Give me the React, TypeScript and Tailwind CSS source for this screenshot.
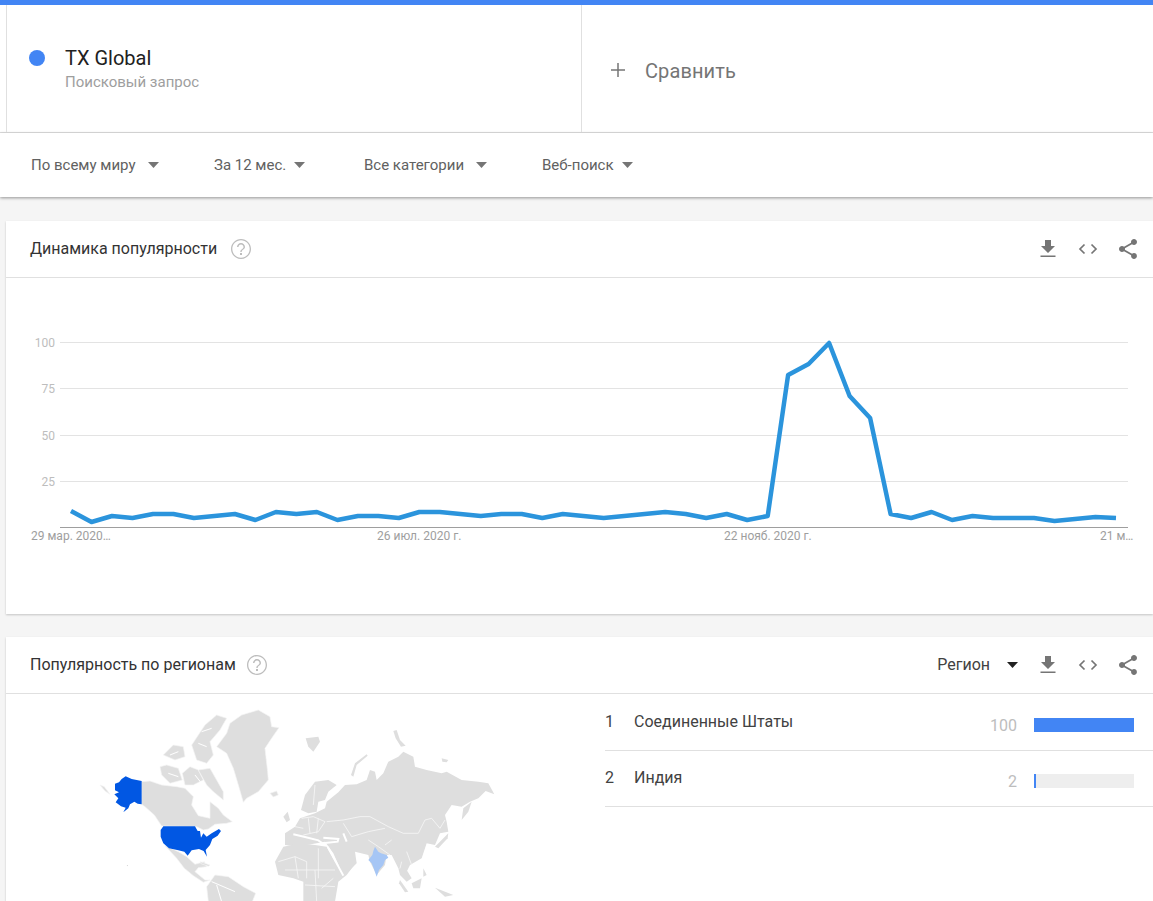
const roboto = "font-['Roboto',sans-serif]";

const Tri = ({ color = "#757575" }: { color?: string }) => (
  <svg width="11" height="6" viewBox="0 0 11 6" className="shrink-0">
    <path d="M0 0h11L5.5 6z" fill={color} />
  </svg>
);

const ActionIcons = () => (
  <div className="flex items-center gap-[16px]">
    <svg width="24" height="24" viewBox="0 0 24 24" fill="#757575">
      <path d="M19 9h-4V3H9v6H5l7 7 7-7zM4.5 18.5v1.6h15v-1.6z" />
    </svg>
    <svg width="24" height="24" viewBox="0 0 24 24" fill="none" stroke="#757575" strokeWidth="1.7">
      <path d="M8.5 7.5 4 12l4.500 4.500M15.500 7.500 20 12l-4.500 4.500" />
    </svg>
    <svg width="24" height="24" viewBox="0 0 24 24" fill="#757575">
      <path d="M18 16.080c-.76 0-1.440.3-1.960.77L8.910 12.700c.05-.23.09-.46.09-.7s-.04-.47-.09-.7l7.050-4.110c.54.5 1.250.81 2.040.81 1.660 0 3-1.340 3-3s-1.340-3-3-3-3 1.340-3 3c0 .24.04.47.09.7L8.040 9.810C7.500 9.310 6.790 9 6 9c-1.660 0-3 1.340-3 3s1.340 3 3 3c.79 0 1.500-.31 2.040-.81l7.120 4.160c-.05.21-.08.43-.08.65 0 1.610 1.310 2.920 2.920 2.920s2.920-1.310 2.920-2.920-1.310-2.920-2.920-2.920z" />
    </svg>
  </div>
);

const Help = () => (
  <svg width="24" height="24" viewBox="0 0 24 24" fill="#bdbdbd">
    <path d="M11 18h2v-2h-2v2zm1-16C6.480 2 2 6.480 2 12s4.480 10 10 10 10-4.480 10-10S17.520 2 12 2zm0 18.700c-4.800 0-8.700-3.900-8.700-8.700S7.200 3.300 12 3.300s8.700 3.900 8.700 8.700-3.900 8.700-8.700 8.700zM12 6c-2.210 0-4 1.790-4 4h1.500c0-1.380 1.120-2.500 2.500-2.500s2.500 1.120 2.500 2.500c0 2-3.200 2-3.200 5h1.400c0-2.250 3.300-2.500 3.300-5 0-2.210-1.790-4-4-4z" />
  </svg>
);

const filters = [
  { label: "По всему миру", cls: "w-[183px] gap-3" },
  { label: "За 12 мес.", cls: "w-[150px] gap-2" },
  { label: "Все категории", cls: "w-[178px] gap-3" },
  { label: "Веб-поиск", cls: "w-[110px] gap-2" },
];

// y position of each weekly point, read off the picture
const line = [
  511, 522, 516, 518, 514, 514, 518, 516, 514, 520, 512, 514, 512, 520, 516, 516, 518, 512, 512, 514, 516, 514, 514,
  518, 514, 516, 518, 516, 514, 512, 514, 518, 514, 520, 516, 375, 364, 343, 396, 418, 514, 518, 512, 520, 516, 518,
  518, 518, 521, 519, 517, 518,
];
const points = line.map((y, i) => `${(71 + i * 20.49).toFixed(1)},${y}`).join(" ");

const TrendChart = () => (
  <svg width="1147" height="336" viewBox="6 278 1147 336" className="block font-['Roboto',sans-serif]">
    {[342.5, 388.5, 435.5, 481.5].map((y) => (
      <line key={y} x1="60" x2="1128" y1={y} y2={y} stroke="#e3e3e3" />
    ))}
    <line x1="60" x2="1128" y1="527.500" y2="527.500" stroke="#9e9e9e" />
    {[
      ["100", 347],
      ["75", 393],
      ["50", 440],
      ["25", 486],
    ].map(([t, y]) => (
      <text key={t} x="55" y={y} textAnchor="end" fontSize="12" fill="#bdbdbd">
        {t}
      </text>
    ))}
    <text x="31" y="540" fontSize="12" fill="#9e9e9e">29 мар. 2020…</text>
    <text x="377" y="540" fontSize="12" fill="#9e9e9e">26 июл. 2020 г.</text>
    <text x="724" y="540" fontSize="12" fill="#9e9e9e">22 нояб. 2020 г.</text>
    <text x="1100" y="540" fontSize="12" fill="#9e9e9e">21 м…</text>
    <polyline points={points} fill="none" stroke="#2b94dc" strokeWidth="4.5" strokeLinejoin="round" />
  </svg>
);

// map shapes traced from the picture at 3x, two groups with their own origin
const landWest = [
  "15,240 28,245 45,268 30,258",
  "140,230 165,228 200,240 245,245 270,250 295,275 290,300 310,332 345,340 345,290 370,310 385,330 412,350 395,355 360,358 340,372 325,375 305,365 200,363 178,330 150,305 140,298",
  "195,185 215,180 250,190 262,225 225,235 200,210",
  "205,150 235,120 265,125 270,155 240,165",
  "262,205 285,185 310,195 325,225 295,240 270,240",
  "310,195 345,190 365,225 385,260 385,285 355,260 335,240",
  "290,120 310,90 330,60 365,30 395,40 375,75 345,110 355,150 335,175 305,165",
  "365,125 395,85 405,55 440,30 490,15 525,35 530,65 552,68 530,100 510,130 518,200 520,225 490,260 455,280 445,292 430,240 415,190 395,145",
  "525,265 545,258 550,270 535,276",
  "210,422 250,440 275,455 300,478 328,470 335,485 310,488 300,500 330,525 345,525 325,532 295,512 268,490 245,460",
  "315,470 345,480 340,484 318,476",
  "335,545 360,510 400,515 445,545 482,565 472,590 340,590",
];
const usa =
  "197,375 205,364 300,364 308,378 315,378 318,398 325,385 335,395 350,385 372,372 378,378 368,392 352,402 345,420 332,435 336,455 326,438 312,432 290,436 278,452 268,440 250,436 222,430 205,415 197,395";
const alaska =
  "60,236 72,232 80,222 92,214 110,222 140,228 140,298 128,296 118,290 105,298 100,310 85,322 92,308 78,304 62,292 70,280 58,268 72,262 60,256";

const landEast = [
  "92,100 130,95 135,110 115,140 100,125",
  "355,78 365,75 375,105 392,122 378,125 362,100",
  "500,160 520,165 515,172 502,170",
  "228,210 240,175 275,148 278,152 245,180 235,215",
  "155,290 190,262 210,240 245,238 275,225 285,195 300,200 305,225 325,205 340,170 370,155 385,140 415,155 420,185 455,195 500,205 515,200 560,225 610,230 640,235 658,268 632,258 610,280 585,290 560,305 530,300 510,330 515,350 520,380 495,385 480,420 455,415 440,460 405,480 395,500 370,490 350,450 335,450 330,480 305,510 285,470 280,450 240,440 245,475 215,505 195,490 175,445 150,410 95,420 75,425 30,420 30,385 60,365 75,340 120,325 150,310",
  "560,345 565,310 590,290 580,320",
  "78,315 90,270 120,230 160,225 185,240 160,260 150,285 130,290 125,320 100,325",
  "25,335 38,320 45,345 35,352",
  "480,425 520,385 518,400 490,430",
  "370,490 395,495 410,520 395,530 375,510",
  "375,525 400,560 390,562 372,535",
  "410,535 440,520 435,550 415,550",
  "445,490 455,510 445,515",
  "480,548 535,570 510,575",
  "0,470 25,425 75,415 120,420 155,425 180,470 200,490 245,470 215,510 190,530 180,590 85,590 85,530 55,520 10,510",
];
const india =
  "300,425 310,440 318,445 335,450 340,458 330,465 325,480 312,495 305,515 296,490 290,475 280,465 292,450 295,438";
const bordersEast = [
  "M155,350 205,345 255,335 285,335 340,365 385,385 430,385 450,345 470,340 495,370 510,345",
  "M205,355 230,395 280,380 330,370",
  "M280,405 310,425 345,450M330,420 350,405",
  "M80,340 115,335 150,350 130,380 85,390M100,340 105,385M130,340 125,385M60,365 85,370M120,240 115,300",
  "M10,470 60,455 95,470 95,520M60,455 70,520M130,430 130,520M30,495 180,495M90,540 180,545M120,495 125,590M175,520 140,550",
  "M410,480 395,440M380,470 375,490",
];
const seasEast = ["M55,388 90,396 130,406 150,420", "M145,398 190,402 188,410 150,414", "M205,385 215,410", "M158,425 205,512"];

const WorldMap = () => (
  <svg width="554" height="207" viewBox="6 694 554 207" className="block">
    <g transform="translate(95 705) scale(0.3333)">
      {landWest.map((p) => (
        <polygon key={p} points={p} fill="#dedede" stroke="#f4f4f4" strokeWidth="2" />
      ))}
      <path d="M225,150 250,140M220,205 250,215M310,115 335,125M300,210 320,235M320,80 350,70M365,540 380,590M350,530 420,560" fill="none" stroke="#fff" strokeWidth="3" />
      <polygon points={usa} fill="#0157e3" />
      <polygon points={alaska} fill="#0157e3" />
      <polygon points="95,480 99,480 98,484" fill="#cfcfcf" />
    </g>
    <g transform="translate(275 705) scale(0.3333)">
      {landEast.map((p) => (
        <polygon key={p} points={p} fill="#dedede" />
      ))}
      {bordersEast.map((d) => (
        <path key={d} d={d} fill="none" stroke="#f7f7f7" strokeWidth="2.500" />
      ))}
      {seasEast.map((d) => (
        <path key={d} d={d} fill="none" stroke="#fff" strokeWidth="6" />
      ))}
      <polygon points={india} fill="#a6c6f5" />
    </g>
  </svg>
);

const regions = [
  { n: 1, name: "Соединенные Штаты", v: 100, w: 100 },
  { n: 2, name: "Индия", v: 2, w: 2 },
];

export default function App() {
  return (
    <div className={`${roboto} h-[901px] w-[1153px] overflow-hidden bg-[#f5f5f5]`}>
      <div className="h-[5px] bg-[#4285f4]" />

      {/* search terms */}
      <div className="flex h-[128px] border-b border-[#e0e0e0] bg-white pl-[6px]">
        <div className="flex w-[576px] flex-col justify-center border-x border-[#e0e0e0] pb-0.5 pl-[22px]">
          <div className="flex items-center gap-5">
            <div className="h-4 w-4 rounded-full bg-[#4285f4]" />
            <span className="text-[20px] leading-[28px] text-[#212121]">TX Global</span>
          </div>
          <div className="pl-9 text-[15px] leading-[20px] text-[#9e9e9e]">Поисковый запрос</div>
        </div>
        <div className="flex items-center pl-[27px] pt-[3px]">
          <svg width="18" height="18" viewBox="0 0 18 18" stroke="#757575" strokeWidth="1.500">
            <path d="M9 2v14M2 9h14" />
          </svg>
          <span className="ml-[18px] mt-0.5 text-[20px] tracking-[0.1px] text-[#757575]">Сравнить</span>
        </div>
      </div>

      {/* filters */}
      <div className="flex h-[64px] items-center bg-white pl-[31px] shadow-[0_1px_3px_rgba(0,0,0,0.4)]">
        {filters.map((f) => (
          <div key={f.label} className={`flex items-center ${f.cls}`}>
            <span className="text-[15px] text-[#616161]">{f.label}</span>
            <Tri />
          </div>
        ))}
      </div>

      <div className="pl-[6px] pt-6">
        {/* interest over time */}
        <section className="bg-white shadow-[0_1px_2px_rgba(0,0,0,0.2)]">
          <div className="flex h-[57px] items-center justify-between border-b border-[#e0e0e0] pl-6 pr-[13px]">
            <div className="flex items-center gap-3">
              <span className="text-[16px] text-[#333333]">Динамика популярности</span>
              <Help />
            </div>
            <ActionIcons />
          </div>
          <TrendChart />
        </section>

        {/* interest by region */}
        <section className="mt-[23px] bg-white shadow-[0_1px_2px_rgba(0,0,0,0.2)]">
          <div className="flex h-[57px] items-center justify-between border-b border-[#e0e0e0] pl-6 pr-[13px]">
            <div className="flex items-center gap-[9px]">
              <span className="text-[16px] text-[#333333]">Популярность по регионам</span>
              <Help />
            </div>
            <div className="flex items-center">
              <span className="text-[16px] text-[#424242]">Регион</span>
              <div className="ml-[17px] mr-[18px]">
                <Tri color="#212121" />
              </div>
              <ActionIcons />
            </div>
          </div>
          <div className="flex">
            <div className="w-[599px] shrink-0">
              <WorldMap />
            </div>
            <div className="flex-1 pt-px">
              {regions.map((r) => (
                <div key={r.n} className="flex h-[56px] items-center border-b border-[#e0e0e0] pb-0.5">
                  <span className="w-[29px] text-[16px] text-[#424242]">{r.n}</span>
                  <span className="flex-1 text-[16px] text-[#424242]">{r.name}</span>
                  <span className="mt-2 text-[16px] text-[#bdbdbd]">{r.v}</span>
                  <div className="ml-[17px] mr-[19px] mt-[6px] h-[14px] w-[100px] bg-[#eeeeee]">
                    <div className="h-full bg-[#4285f4]" style={{ width: `${r.w}%` }} />
                  </div>
                </div>
              ))}
            </div>
          </div>
        </section>
      </div>
    </div>
  );
}
